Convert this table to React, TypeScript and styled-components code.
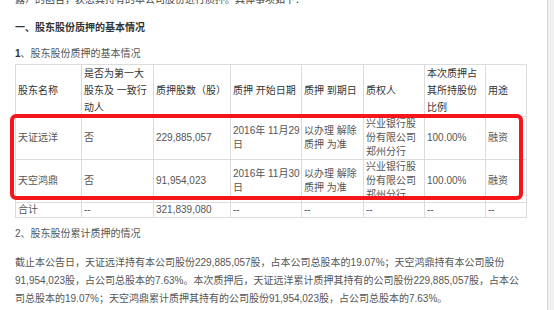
import React from "react";
import styled, { createGlobalStyle } from "styled-components";

const Global = createGlobalStyle`
  html, body { margin: 0; padding: 0; background: #fff; overflow: hidden; }
  body { font-family: "Liberation Sans", "Noto Sans CJK SC", sans-serif; color: #555; }
`;

const Page = styled.div`
  display: flex;
  width: 554px;
  height: 310px;
  overflow: hidden;
`;

const Content = styled.div`
  flex: 1;
  padding-left: 15px;
  font-size: 10px;
`;

const Scrollbar = styled.div`
  width: 6px;
  border-left: 1px solid #d6d6d6;
  background: #f1f1f1;
`;

const TopLine = styled.p`
  margin: -7px 0 0;
  line-height: 14px;
  color: #444;
`;

const Heading = styled.h2`
  margin: 14px 0 0;
  font-size: 10px;
  line-height: 14px;
  font-weight: bold;
  color: #333;
`;

const SubHeading = styled.p`
  margin: 12px 0 0;
  line-height: 14px;
  color: #555;
  b { color: #333; }
`;

const TableWrap = styled.div`
  position: relative;
  width: 511px;
  margin-top: 3px;
`;

const Table = styled.table`
  width: 511px;
  table-layout: fixed;
  border-collapse: collapse;
  font-size: 10px;
`;

const Th = styled.td`
  border: 1px solid #dcdcdc;
  padding: 0 0 0 2px;
  line-height: 17px;
  color: #333;
  vertical-align: middle;
  text-align: left;
`;

const Td = styled.td<{ $h?: number }>`
  border: 1px solid #dcdcdc;
  padding: 0 0 0 2px;
  line-height: 14px;
  height: ${(p) => p.$h ?? 42}px;
  color: #555;
  vertical-align: middle;
`;

const Highlight = styled.div`
  position: absolute;
  left: -5px;
  top: 50px;
  width: 505px;
  height: 78px;
  border: 4px solid #f5161b;
  border-radius: 6px;
  pointer-events: none;
`;

const Heading2 = styled.p`
  margin: 9px 0 0;
  line-height: 14px;
  color: #555;
`;

const Para = styled.p`
  margin: 13px 0 0;
  line-height: 18px;
  width: 506px;
  color: #555;
`;

const widths = [66, 72, 77, 71, 62, 61, 61, 41];

const rows = [
  ["天证远洋", "否", "229,885,057", "2016年 11月29日", "以办理 解除质押 为准", "兴业银行股份有限公司郑州分行", "100.00%", "融资"],
  ["天空鸿鼎", "否", "91,954,023", "2016年 11月30日", "以办理 解除质押 为准", "兴业银行股份有限公司郑州分行", "100.00%", "融资"],
];

export default function App() {
  return (
    <>
      <Global />
      <Page>
        <Content>
          <TopLine>露）的函告，获悉其持有的本公司股份进行质押。具体事项如下：</TopLine>
          <Heading>一、股东股份质押的基本情况</Heading>
          <SubHeading><b>1</b>、股东股份质押的基本情况</SubHeading>
          <TableWrap>
            <Table>
              <colgroup>
                {widths.map((w, i) => (
                  <col key={i} style={{ width: w }} />
                ))}
              </colgroup>
              <tbody>
                <tr>
                  <Th>股东名称</Th>
                  <Th>是否为第一大股东及 一致行动人</Th>
                  <Th>质押股数（股）</Th>
                  <Th>质押 开始日期</Th>
                  <Th>质押 到期日</Th>
                  <Th>质权人</Th>
                  <Th>本次质押占其所持股份比例</Th>
                  <Th>用途</Th>
                </tr>
                {rows.map((r, i) => (
                  <tr key={i}>
                    {r.map((c, j) => (
                      <Td key={j}>{c}</Td>
                    ))}
                  </tr>
                ))}
                <tr>
                  <Td $h={12}>合计</Td>
                  <Td $h={12}>--</Td>
                  <Td $h={12}>321,839,080</Td>
                  <Td $h={12}>--</Td>
                  <Td $h={12}>--</Td>
                  <Td $h={12}>--</Td>
                  <Td $h={12}>--</Td>
                  <Td $h={12}>--</Td>
                </tr>
              </tbody>
            </Table>
            <Highlight />
          </TableWrap>
          <Heading2>2、股东股份累计质押的情况</Heading2>
          <Para>
            截止本公告日，天证远洋持有本公司股份229,885,057股，占本公司总股本的19.07%；天空鸿鼎持有本公司股份91,954,023股，占公司总股本的7.63%。本次质押后，天证远洋累计质押其持有的公司股份229,885,057股，占本公司总股本的19.07%；天空鸿鼎累计质押其持有的公司股份91,954,023股，占公司总股本的7.63%。
          </Para>
        </Content>
        <Scrollbar />
      </Page>
    </>
  );
}
